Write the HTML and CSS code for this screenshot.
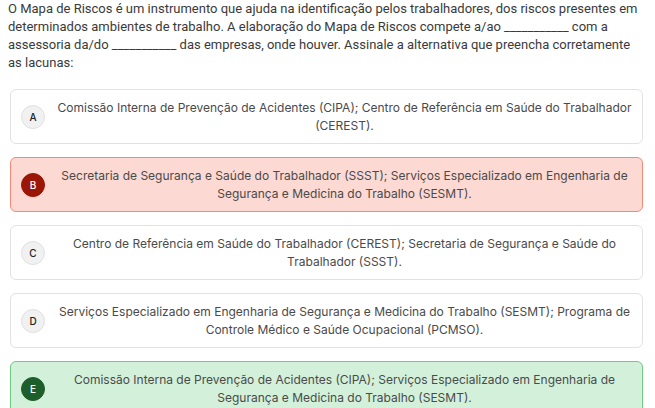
FILE: index.html
```html
<!DOCTYPE html>
<html lang="pt">
<head>
<meta charset="utf-8">
<link rel="stylesheet" href="styles.css">
</head>
<body>
<div class="page">
  <p class="question">O Mapa de Riscos é um instrumento que ajuda na identificação pelos trabalhadores, dos riscos presentes em determinados ambientes de trabalho. A elaboração do Mapa de Riscos compete a/ao ___________ com a assessoria da/do ___________ das empresas, onde houver. Assinale a alternativa que preencha corretamente as lacunas:</p>
  <div class="options">
    <div class="option">
      <span class="badge">A</span>
      <span class="text">Comissão Interna de Prevenção de Acidentes (CIPA); Centro de Referência em Saúde do Trabalhador (CEREST).</span>
    </div>
    <div class="option wrong">
      <span class="badge">B</span>
      <span class="text">Secretaria de Segurança e Saúde do Trabalhador (SSST); Serviços Especializado em Engenharia de Segurança e Medicina do Trabalho (SESMT).</span>
    </div>
    <div class="option">
      <span class="badge">C</span>
      <span class="text">Centro de Referência em Saúde do Trabalhador (CEREST); Secretaria de Segurança e Saúde do Trabalhador (SSST).</span>
    </div>
    <div class="option">
      <span class="badge">D</span>
      <span class="text">Serviços Especializado em Engenharia de Segurança e Medicina do Trabalho (SESMT); Programa de Controle Médico e Saúde Ocupacional (PCMSO).</span>
    </div>
    <div class="option right">
      <span class="badge">E</span>
      <span class="text">Comissão Interna de Prevenção de Acidentes (CIPA); Serviços Especializado em Engenharia de Segurança e Medicina do Trabalho (SESMT).</span>
    </div>
  </div>
</div>
</body>
</html>
```
FILE: styles.css
```css
html, body {
  margin: 0;
  padding: 0;
  background: #ffffff;
}
body {
  font-family: Inter, "Noto Sans", sans-serif;
  color: #444444;
}
.page {
  padding: 0 8px 0 8px;
}
.question {
  margin: 0 0 17px 0;
  font-family: Roboto, "Liberation Sans", sans-serif;
  font-size: 13px;
  line-height: 18px;
  color: #3a3a3a;
}
.options {
  display: flex;
  flex-direction: column;
  gap: 13px;
  padding: 0 4px 0 2px;
}
.option {
  display: flex;
  align-items: center;
  min-height: 53px;
  padding: 0 10px 0 10px;
  border: 1px solid #e2e2e2;
  border-radius: 6px;
  background: #ffffff;
}
.badge {
  flex: none;
  width: 22px;
  height: 22px;
  border-radius: 50%;
  background: #f1f1f1;
  border: 1px solid #e0e0e0;
  display: flex;
  align-items: center;
  justify-content: center;
  font-size: 10px;
  font-weight: 500;
  color: #222;
}
.text {
  flex: 1;
  text-align: center;
  font-size: 12px;
  line-height: 18px;
  color: #4a4a4a;
  padding-left: 12px;
}
.option.wrong {
  background: #fdd9d3;
  border-color: #f28a78;
}
.option.wrong .badge {
  background: #9b1606;
  border-color: #9b1606;
  color: #fff;
}
.option.right {
  background: #d3f1da;
  border-color: #6dcc7e;
}
.option.right .badge {
  background: #1d5e2a;
  border-color: #1d5e2a;
  color: #fff;
}
```
